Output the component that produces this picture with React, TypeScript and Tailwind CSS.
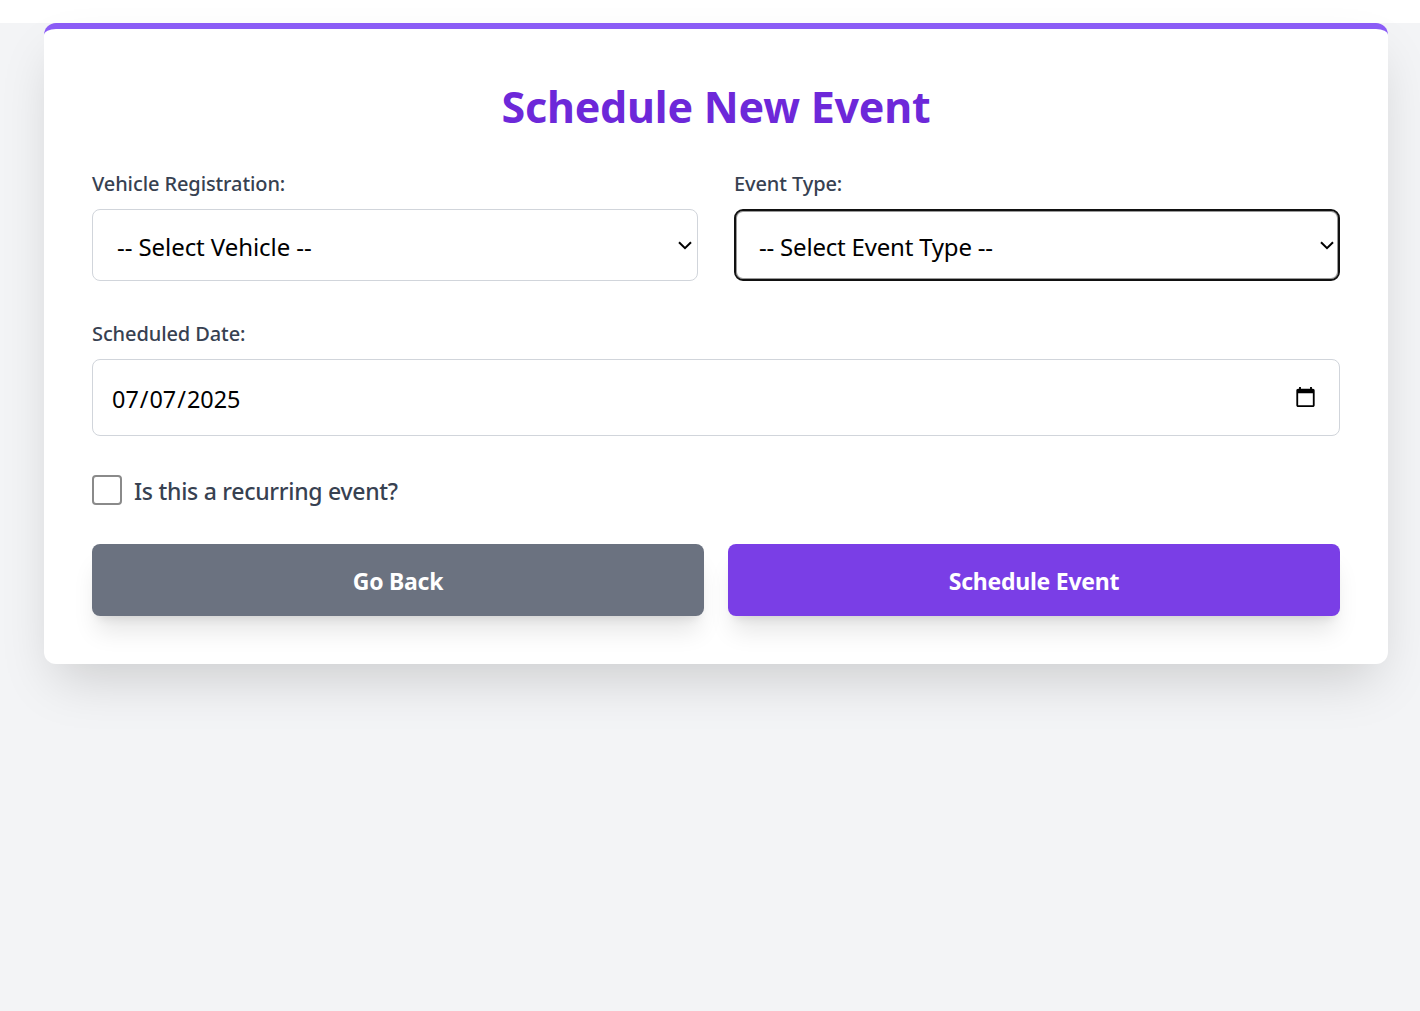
import React from "react";

const font = "font-['Noto_Sans','Open_Sans',sans-serif]";

const Chevron = () => (
  <svg
    viewBox="0 0 14 9"
    className="pointer-events-none absolute top-[32px] right-[6px] h-[9px] w-[14px]"
    fill="none"
    stroke="#000"
    strokeWidth="2"
  >
    <path d="M1 1.2 7 7.2 13 1.2" />
  </svg>
);

export default function App() {
  return (
    <div className={`${font} min-h-[1011px] bg-white pt-[23px]`}>
      <div className="min-h-[988px] bg-[#f3f4f6] pr-[32px] pl-[44px]">
        <form className="rounded-xl border-t-[6px] border-[#8b5cf6] bg-white px-12 pt-[48px] pb-12 shadow-[0_25px_50px_-12px_rgba(0,0,0,0.17)]">
          <h1 className="mb-[33px] text-center text-[43px] leading-[60px] font-bold tracking-[-0.22px] text-[#6d28d9]">
            Schedule New Event
          </h1>

          <div className="grid grid-cols-2 gap-9">
            <div>
              <label className="mb-[11px] block text-[20px] leading-[28px] font-medium tracking-[-0.1px] text-[#374151]">
                Vehicle Registration:
              </label>
              <div className="relative">
                <select
                  defaultValue=""
                  className="h-[72px] w-full appearance-none rounded-lg border border-[#d1d5db] bg-white px-6 pt-[4px] text-[24px] tracking-[-0.07px] text-black"
                >
                  <option value="">-- Select Vehicle --</option>
                </select>
                <Chevron />
              </div>
            </div>
            <div>
              <label className="mb-[11px] block text-[20px] leading-[28px] font-medium tracking-[-0.1px] text-[#374151]">
                Event Type:
              </label>
              <div className="relative">
                <select
                  defaultValue=""
                  className="h-[72px] w-full appearance-none rounded-[9px] border-2 border-[#111111] bg-white px-[23px] pt-[4px] text-[24px] tracking-[-0.2px] text-black shadow-[inset_0_0_0_1px_rgba(0,0,0,0.4)]"
                >
                  <option value="">-- Select Event Type --</option>
                </select>
                <Chevron />
              </div>
            </div>
          </div>

          <div className="mt-[39px]">
            <label className="mb-[11px] block text-[20px] leading-[28px] font-medium tracking-[-0.1px] text-[#374151]">
              Scheduled Date:
            </label>
            <input
              type="date"
              defaultValue="2025-07-07"
              className="h-[77px] w-full rounded-lg border border-[#d1d5db] bg-white pt-[4px] pr-5 pl-[18px] text-[23.4px] text-black [&::-webkit-calendar-picker-indicator]:mb-[4px]"
            />
          </div>

          <div className="mt-[37px] flex items-center gap-3">
            <input
              type="checkbox"
              className="h-[30px] w-[30px] appearance-none rounded-[4px] border-2 border-[#8a8a8a] bg-white"
            />
            <label className="pt-[2px] text-[23px] leading-[32px] font-medium tracking-[-0.28px] text-[#374151]">
              Is this a recurring event?
            </label>
          </div>

          <div className="mt-[37px] flex gap-6">
            <button
              type="button"
              className="h-[72px] flex-1 rounded-lg bg-[#6b7280] pt-[2px] text-[23px] font-bold tracking-[-0.25px] text-white shadow-xl"
            >
              Go Back
            </button>
            <button
              type="button"
              className="h-[72px] flex-1 rounded-lg bg-[#7a3ee6] pt-[2px] text-[23px] font-bold tracking-[-0.25px] text-white shadow-xl"
            >
              Schedule Event
            </button>
          </div>
        </form>
      </div>
    </div>
  );
}
